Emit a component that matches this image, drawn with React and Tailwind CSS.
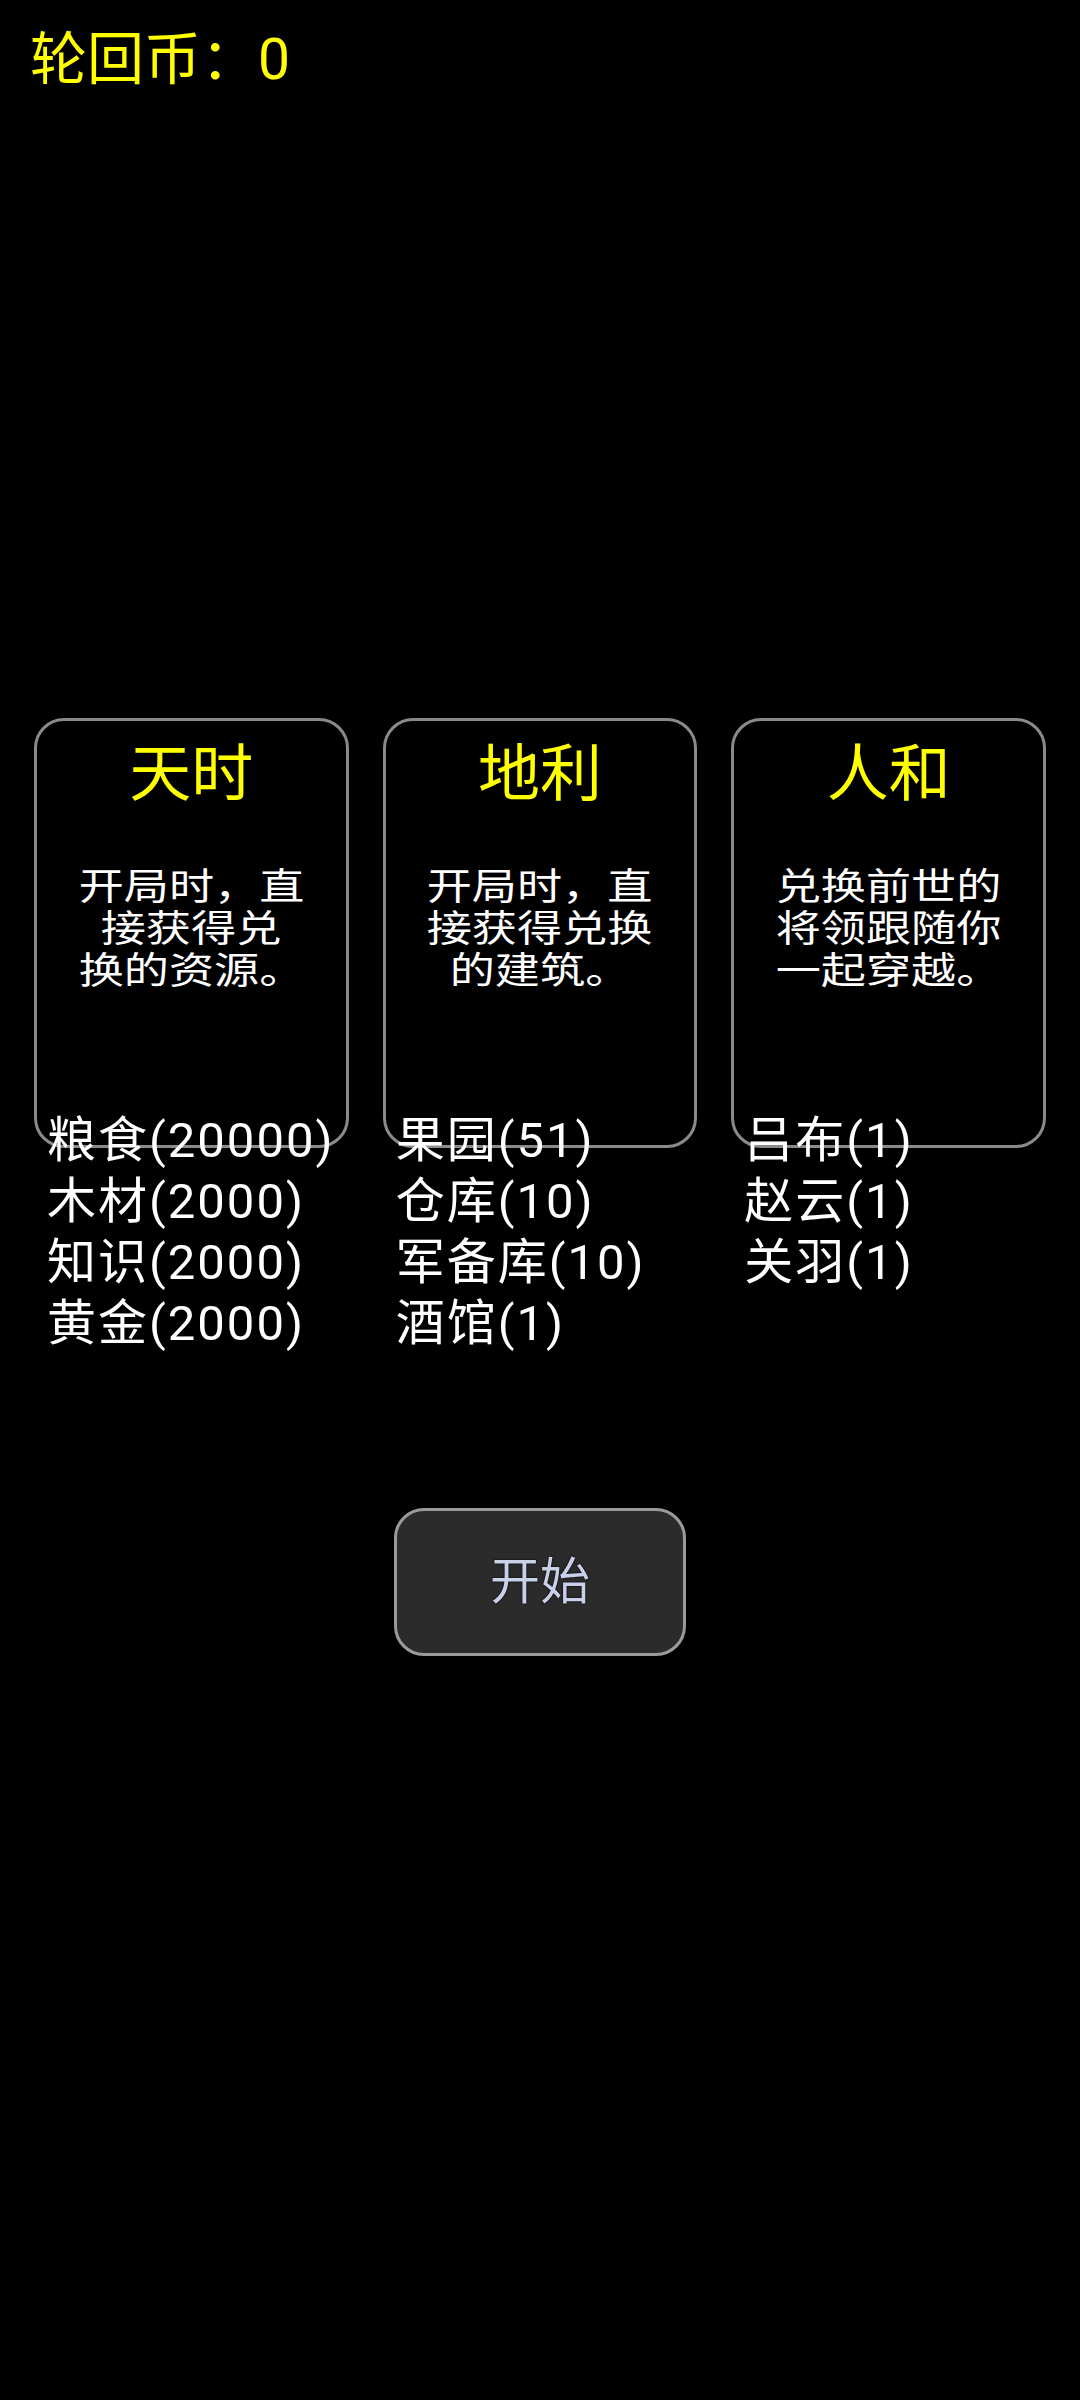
import React from 'react';

const CARDS = [
    {
        titulo: '天时',
        desc: ['开局时，直', '接获得兑', '换的资源。'],
        itens: ['粮食(20000)', '木材(2000)', '知识(2000)', '黄金(2000)'],
    },
    {
        titulo: '地利',
        desc: ['开局时，直', '接获得兑换', '的建筑。'],
        itens: ['果园(51)', '仓库(10)', '军备库(10)', '酒馆(1)'],
    },
    {
        titulo: '人和',
        desc: ['兑换前世的', '将领跟随你', '一起穿越。'],
        itens: ['吕布(1)', '赵云(1)', '关羽(1)'],
    },
];

const Card = ({ titulo, desc, itens }) => (
    <div className="flex flex-col">
        <div className="h-[430px] border-[3px] border-[#8a8a8a] rounded-[30px] flex flex-col items-center">
            <h2 className="mt-[18px] text-[62px] leading-[72px] text-[#ffff00]">{titulo}</h2>
            <div className="mt-[56px] flex flex-col items-center text-white text-[37px] leading-[42px]">
                {desc.map(l => (
                    <span key={l} className="inline-block scale-x-[1.22] whitespace-nowrap">{l}</span>
                ))}
            </div>
        </div>
        <ul className="-mt-[38px] pl-[13px] text-white text-[49px] leading-[61px] tracking-[2px] font-['Roboto','Noto_Sans_CJK_SC',sans-serif]">
            {itens.map(i => <li key={i} className="whitespace-nowrap">{i}</li>)}
        </ul>
    </div>
);

export default function App() {
    return (
        <div className="w-[1080px] min-h-[2400px] bg-black font-['Roboto','Noto_Sans_CJK_SC',sans-serif]">
            <div className="pt-[24px] pl-[30px] text-[57px] leading-[72px] text-[#ffff00]">轮回币：0</div>

            <div className="mt-[622px] px-[34px] grid grid-cols-3 gap-[34px]">
                {CARDS.map(c => <Card key={c.titulo} {...c} />)}
            </div>

            <div className="mt-[154px] flex justify-center">
                <button className="w-[292px] h-[148px] bg-[#2b2b2b] border-[3px] border-[#9a9a9a] rounded-[30px] text-[50px] text-[#c9d1ea] [text-shadow:0_0_2px_#000,0_0_1px_#000]">
                    开始
                </button>
            </div>
        </div>
    );
}
